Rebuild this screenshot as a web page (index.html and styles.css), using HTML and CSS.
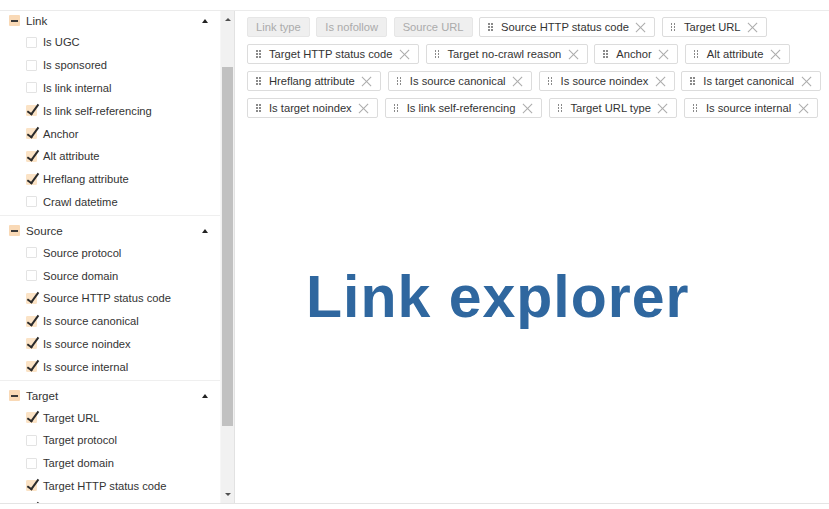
FILE: index.html
```html
<!DOCTYPE html>
<html lang="en">
<head>
    <meta charset="UTF-8">
    <meta name="viewport" content="width=device-width, initial-scale=1.0">
    <title>Link explorer</title>
    <link rel="stylesheet" href="styles.css">
</head>
<body>

    <div class="app">
        <!-- Column picker -->
        <aside class="sidebar">
            <div class="fields">
                <div class="fields-inner">
                    <div class="group">
                        <div class="group-header">
                            <span class="collapse-box"></span>
                            <span class="group-name">Link</span>
                            <span class="caret-up"></span>
                        </div>
                        <div class="field"><span class="check"></span>Is UGC</div>
                        <div class="field"><span class="check"></span>Is sponsored</div>
                        <div class="field"><span class="check"></span>Is link internal</div>
                        <div class="field"><span class="check checked"></span>Is link self-referencing</div>
                        <div class="field"><span class="check checked"></span>Anchor</div>
                        <div class="field"><span class="check checked"></span>Alt attribute</div>
                        <div class="field"><span class="check checked"></span>Hreflang attribute</div>
                        <div class="field"><span class="check"></span>Crawl datetime</div>
                    </div>

                    <div class="group">
                        <div class="group-header">
                            <span class="collapse-box"></span>
                            <span class="group-name">Source</span>
                            <span class="caret-up"></span>
                        </div>
                        <div class="field"><span class="check"></span>Source protocol</div>
                        <div class="field"><span class="check"></span>Source domain</div>
                        <div class="field"><span class="check checked"></span>Source HTTP status code</div>
                        <div class="field"><span class="check checked"></span>Is source canonical</div>
                        <div class="field"><span class="check checked"></span>Is source noindex</div>
                        <div class="field"><span class="check checked"></span>Is source internal</div>
                    </div>

                    <div class="group">
                        <div class="group-header">
                            <span class="collapse-box"></span>
                            <span class="group-name">Target</span>
                            <span class="caret-up"></span>
                        </div>
                        <div class="field"><span class="check checked"></span>Target URL</div>
                        <div class="field"><span class="check"></span>Target protocol</div>
                        <div class="field"><span class="check"></span>Target domain</div>
                        <div class="field"><span class="check checked"></span>Target HTTP status code</div>
                        <div class="field"><span class="check checked"></span>Target no-crawl reason</div>
                    </div>
                </div>
            </div>

            <div class="scrollbar">
                <div class="scroll-btn"><span class="arrow-up"></span></div>
                <div class="scroll-gap"></div>
                <div class="scroll-thumb"></div>
                <div class="scroll-rest"></div>
                <div class="scroll-btn"><span class="arrow-down"></span></div>
            </div>
        </aside>

        <!-- Selected columns + title -->
        <main class="content">
            <div class="tags">
                <span class="tag fixed">Link type</span>
                <span class="tag fixed">Is nofollow</span>
                <span class="tag fixed">Source URL</span>
                <span class="tag"><span class="handle"></span>Source HTTP status code<span class="remove"></span></span>
                <span class="tag"><span class="handle"></span>Target URL<span class="remove"></span></span>
                <span class="tag"><span class="handle"></span>Target HTTP status code<span class="remove"></span></span>
                <span class="tag"><span class="handle"></span>Target no-crawl reason<span class="remove"></span></span>
                <span class="tag"><span class="handle"></span>Anchor<span class="remove"></span></span>
                <span class="tag"><span class="handle"></span>Alt attribute<span class="remove"></span></span>
                <span class="tag"><span class="handle"></span>Hreflang attribute<span class="remove"></span></span>
                <span class="tag"><span class="handle"></span>Is source canonical<span class="remove"></span></span>
                <span class="tag"><span class="handle"></span>Is source noindex<span class="remove"></span></span>
                <span class="tag"><span class="handle"></span>Is target canonical<span class="remove"></span></span>
                <span class="tag"><span class="handle"></span>Is target noindex<span class="remove"></span></span>
                <span class="tag"><span class="handle"></span>Is link self-referencing<span class="remove"></span></span>
                <span class="tag"><span class="handle"></span>Target URL type<span class="remove"></span></span>
                <span class="tag"><span class="handle"></span>Is source internal<span class="remove"></span></span>
            </div>

            <h1 class="title">Link explorer</h1>
        </main>
    </div>

</body>
</html>
```

FILE: styles.css
```css
/* --- Basic Setup --- */
body {
    margin: 0;
    background: #ffffff;
    font-family: "Liberation Sans", Arial, sans-serif;
    font-size: 11.2px;
    color: #333333;
}

.app {
    display: flex;
    margin-top: 10px;
    height: 494px;
    box-sizing: border-box;
    border-top: 1px solid #ebebeb;
    border-bottom: 1px solid #e4e4e4;
}

/* --- Sidebar / column picker --- */
.sidebar {
    display: flex;
    width: 235px;
    flex-shrink: 0;
    border-right: 1px solid #e2e2e2;
    box-sizing: border-box;
}

.fields {
    width: 220px;
    overflow: hidden;
}

.fields-inner { margin-top: -5px; }

.group {
    padding: 4px 0 2px;
    border-bottom: 1px solid #efefef;
}

.group-header {
    display: flex;
    align-items: center;
    height: 21px;
    padding: 0 12px 0 9px;
    font-size: 11.6px;
}

.collapse-box {
    position: relative;
    width: 11px;
    height: 11px;
    margin-right: 6px;
    background: #f9d9b6;
    border-radius: 1px;
}
.collapse-box::after {
    content: "";
    position: absolute;
    left: 2px; right: 2px; top: 5px;
    height: 2px;
    background: #3a3a3a;
}

.group-name { flex-grow: 1; }

.caret-up {
    width: 0; height: 0;
    border-left: 3.5px solid transparent;
    border-right: 3.5px solid transparent;
    border-bottom: 4px solid #222;
}

.field {
    display: flex;
    align-items: center;
    height: 22.8px;
    padding-left: 26px;
}

.check {
    position: relative;
    width: 11px;
    height: 11px;
    margin-right: 6px;
    box-sizing: border-box;
    border: 1px solid #e3e3e3;
    border-radius: 1px;
    background: #fff;
}
.check.checked {
    border-color: #fbe3c6;
    background: #fbe3c6;
}
.check.checked::after {
    content: "";
    position: absolute;
    left: 3px; top: -4px;
    width: 4px; height: 11px;
    border-right: 2px solid #2b2b2b;
    border-bottom: 2px solid #2b2b2b;
    transform: rotate(36deg);
}

/* --- Scrollbar --- */
.scrollbar {
    display: flex;
    flex-direction: column;
    width: 14px;
    background: #f1f1f1;
    border-left: 1px solid #f6f6f6;
    box-sizing: border-box;
}

.scroll-btn {
    height: 17px;
    display: flex;
    justify-content: center;
    align-items: center;
    flex-shrink: 0;
}

.arrow-up, .arrow-down {
    width: 0; height: 0;
    border-left: 3px solid transparent;
    border-right: 3px solid transparent;
}
.arrow-up { border-bottom: 3px solid #505050; }
.arrow-down { border-top: 3px solid #505050; }

.scroll-gap { height: 39px; flex-shrink: 0; }
.scroll-thumb {
    height: 359px;
    margin: 0 1px;
    background: #c1c1c1;
    flex-shrink: 0;
}
.scroll-rest { flex-grow: 1; }

/* --- Main area --- */
.content {
    flex-grow: 1;
    padding: 6px 3px 0 12px;
}

.tags {
    display: flex;
    flex-wrap: wrap;
    gap: 7px 6.5px;
}

.tag {
    display: inline-flex;
    align-items: center;
    height: 20px;
    padding: 0 8px;
    box-sizing: border-box;
    border: 1px solid #dcdcdc;
    border-radius: 2px;
    background: #fff;
    white-space: nowrap;
}

.tag.fixed {
    background: #efefef;
    border-color: #e6e6e6;
    color: #ababab;
}

/* six-dot drag handle */
.handle {
    position: relative;
    width: 4px;
    height: 8px;
    margin-right: 9px;
}
.handle::before {
    content: "";
    position: absolute;
    left: 0; top: 0;
    width: 1.5px; height: 1.5px;
    background: #8a8a8a;
    box-shadow: 3px 0 #8a8a8a, 0 3px #8a8a8a, 3px 3px #8a8a8a,
                0 6px #8a8a8a, 3px 6px #8a8a8a;
}

.remove {
    position: relative;
    width: 11px;
    height: 11px;
    margin-left: 6.5px;
}
.remove::before, .remove::after {
    content: "";
    position: absolute;
    left: 5px; top: -1px;
    width: 1.2px; height: 13px;
    background: #ababab;
    transform: rotate(45deg);
}
.remove::after { transform: rotate(-45deg); }

.title {
    margin: 150px 0 0;
    padding-left: 59px;
    font-size: 59px;
    line-height: 59px;
    font-weight: bold;
    letter-spacing: 1px;
    color: #2f679f;
}
```
